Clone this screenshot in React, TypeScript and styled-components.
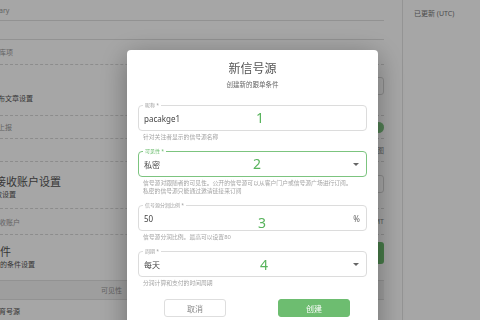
import React from 'react';
import styled, { createGlobalStyle } from 'styled-components';

const GlobalStyle = createGlobalStyle`
  html, body {
    margin: 0;
    padding: 0;
    width: 480px;
    height: 320px;
    overflow: hidden;
    background: #fff;
  }
  body {
    font-family: "Noto Sans", "Noto Sans CJK SC", sans-serif;
  }
`;

const Page = styled.div`
  display: flex;
  width: 480px;
  height: 320px;
  overflow: hidden;
  background: #fff;
`;

const Main = styled.div`
  width: 403px;
  flex: none;
  box-sizing: border-box;
  padding-right: 18px;
  border-right: 1px solid #e4e4e4;
  display: flex;
  flex-direction: column;
`;

const Row = styled.div<{ $h: number; $line?: 'solid' | 'dashed' | 'none'; $align?: string; $shade?: boolean }>`
  height: ${(p) => p.$h}px;
  flex: none;
  box-sizing: border-box;
  display: flex;
  justify-content: space-between;
  align-items: ${(p) => p.$align || 'center'};
  background: ${(p) => (p.$shade ? '#f3f3f3' : 'transparent')};
  border-bottom: ${(p) =>
    p.$line === 'none' ? 'none' : p.$line === 'dashed' ? '1px dashed #d8d8d8' : '1px solid #e0e0e0'};
`;

const Label = styled.span<{ $cut?: number }>`
  margin-left: ${(p) => -(p.$cut || 0)}px;
  font-size: 7px;
  color: #999;
  white-space: nowrap;
`;

const SectionText = styled.div<{ $cut?: number; $top?: number; $bottom?: number }>`
  margin: ${(p) => p.$top || 0}px 0 ${(p) => p.$bottom || 0}px ${(p) => -(p.$cut || 0)}px;
  display: flex;
  flex-direction: column;
  white-space: nowrap;
`;

const SectionTitle = styled.span`
  font-size: 11px;
  line-height: 15px;
  color: #555;
`;

const SectionSub = styled.span<{ $indent?: number }>`
  padding-left: ${(p) => p.$indent || 0}px;
  font-size: 7px;
  line-height: 11px;
  color: #555;
`;

const HeaderLabel = styled.span<{ $cut?: number; $bottom?: number }>`
  margin: 0 0 ${(p) => p.$bottom || 0}px ${(p) => -(p.$cut || 0)}px;
  font-size: 7px;
  line-height: 10px;
  color: #555;
  white-space: nowrap;
`;

const GhostInput = styled.div<{ $mt?: number; $mb?: number }>`
  width: 120px;
  height: 18px;
  margin: ${(p) => p.$mt || 0}px 0 ${(p) => p.$mb || 0}px;
  border: 1px solid #d6d6d6;
  border-radius: 3px;
  box-sizing: border-box;
`;

const Toggle = styled.div`
  width: 22px;
  height: 10px;
  border-radius: 5px;
  background: #c9e6ca;
  display: flex;
  justify-content: flex-end;
  align-items: center;
`;

const Knob = styled.div`
  width: 11px;
  height: 11px;
  border-radius: 50%;
  background: #7fc482;
`;

const SideText = styled.span`
  font-size: 7px;
  color: #888;
`;

const GreenBlock = styled.div`
  width: 60px;
  height: 22px;
  margin-bottom: 16px;
  border-radius: 3px;
  background: #6dbd70;
`;

const HeadCell = styled.div`
  width: 122px;
  font-size: 7px;
  color: #999;
  text-align: right;
`;

const Sidebar = styled.div`
  flex: 1;
  padding: 9px 11px;
  font-size: 7px;
  line-height: 10px;
`;

const SidebarNote = styled.span`
  color: #777;
`;

const Overlay = styled.div`
  position: fixed;
  inset: 0;
  background: rgba(0, 0, 0, 0.35);
  display: flex;
  align-items: flex-start;
  padding: 50px 0 0 127px;
  box-sizing: border-box;
`;

const Modal = styled.div`
  width: 251px;
  height: 300px;
  flex: none;
  box-sizing: border-box;
  background: #fff;
  border-radius: 4px;
  box-shadow: 0 6px 28px rgba(0, 0, 0, 0.35);
  padding: 11px 11px 0;
  display: flex;
  flex-direction: column;
`;

const Title = styled.div`
  text-align: center;
  font-size: 12px;
  line-height: 16px;
  color: #555;
`;

const Subtitle = styled.div`
  text-align: center;
  font-size: 6.5px;
  line-height: 10px;
  color: #666;
  margin: 3px 0 15px;
`;

const Group = styled.div`
  margin-bottom: 10px;
`;

const Field = styled.div<{ $focus?: boolean }>`
  position: relative;
  height: 26px;
  box-sizing: border-box;
  border: 1px solid ${(p) => (p.$focus ? '#7cc47f' : '#dcdcdc')};
  border-radius: 4px;
  display: flex;
  align-items: center;
  padding: 0 6px 0 5px;
`;

const FieldLabel = styled.span<{ $focus?: boolean }>`
  position: absolute;
  top: -4px;
  left: 4px;
  padding: 0 2px;
  background: #fff;
  font-size: 5px;
  line-height: 7px;
  color: ${(p) => (p.$focus ? '#6bbd6e' : '#a0a0a0')};
`;

const Value = styled.span`
  flex: 1;
  font-size: 8px;
  color: #444;
`;

const Suffix = styled.span`
  font-size: 8px;
  color: #666;
`;

const Caret = styled.span`
  width: 0;
  height: 0;
  margin-right: 1px;
  border-left: 3px solid transparent;
  border-right: 3px solid transparent;
  border-top: 3.5px solid #666;
`;

const Marker = styled.span<{ $x: number; $y: number }>`
  position: absolute;
  left: ${(p) => p.$x}px;
  top: ${(p) => p.$y}px;
  font-size: 14px;
  line-height: 16px;
  color: #57b35b;
`;

const Helper = styled.div`
  margin-top: 2px;
  padding-left: 5px;
  font-size: 5.8px;
  line-height: 8px;
  color: #a3a3a3;
  white-space: nowrap;
`;

const Actions = styled.div`
  display: flex;
  gap: 52px;
  padding-left: 26px;
  margin-top: 2px;
`;

const Button = styled.button<{ $primary?: boolean }>`
  width: ${(p) => (p.$primary ? 72 : 62)}px;
  height: 18px;
  box-sizing: border-box;
  border-radius: 3px;
  border: 1px solid ${(p) => (p.$primary ? '#6dbd70' : '#dedede')};
  background: ${(p) => (p.$primary ? '#6dbd70' : '#fff')};
  color: ${(p) => (p.$primary ? '#fff' : '#888')};
  font-family: inherit;
  font-size: 8px;
  padding: 0;
`;

export default function App() {
  return (
    <>
      <GlobalStyle />
      <Page>
        <Main>
          <Row $h={21}>
            <Label $cut={1}>ary</Label>
          </Row>
          <Row $h={19} />
          <Row $h={25} $line="dashed">
            <Label $cut={1}>库项</Label>
          </Row>
          <Row $h={51} $line="dashed" $align="flex-end">
            <HeaderLabel $cut={2} $bottom={11}>布文章设置</HeaderLabel>
            <GhostInput $mb={20} />
          </Row>
          <Row $h={23} $line="dashed">
            <Label $cut={2}>上报</Label>
            <Toggle>
              <Knob />
            </Toggle>
          </Row>
          <Row $h={23} $line="dashed">
            <span />
            <SideText>设置图</SideText>
          </Row>
          <Row $h={47} $line="dashed" $align="flex-start">
            <SectionText $cut={5} $top={12}>
              <SectionTitle>接收账户设置</SectionTitle>
              <SectionSub>效设置</SectionSub>
            </SectionText>
            <GhostInput $mt={13} />
          </Row>
          <Row $h={26} $line="dashed">
            <Label $cut={1}>收账户</Label>
            <SideText>GMT</SideText>
          </Row>
          <Row $h={46} $align="flex-end">
            <SectionText $cut={11} $bottom={10}>
              <SectionTitle>条件</SectionTitle>
              <SectionSub $indent={11}>的条件设置</SectionSub>
            </SectionText>
            <GreenBlock />
          </Row>
          <Row $h={19} $shade>
            <HeadCell>可见性</HeadCell>
          </Row>
          <Row $h={24} $line="none">
            <HeaderLabel $cut={1}>育号源</HeaderLabel>
          </Row>
        </Main>
        <Sidebar>
          <SidebarNote>已更新 (UTC)</SidebarNote>
        </Sidebar>
      </Page>
      <Overlay>
        <Modal>
          <Title>新信号源</Title>
          <Subtitle>创建新的跟单条件</Subtitle>

          <Group>
            <Field>
              <FieldLabel>昵称 *</FieldLabel>
              <Value>pacakge1</Value>
              <Marker $x={117} $y={4}>1</Marker>
            </Field>
            <Helper>针对关注者显示的信号源名称</Helper>
          </Group>

          <Group>
            <Field $focus>
              <FieldLabel $focus>可见性 *</FieldLabel>
              <Value>私密</Value>
              <Caret />
              <Marker $x={114} $y={4}>2</Marker>
            </Field>
            <Helper>
              信号源对跟随者的可见性。公开的信号源可以从客户门户或信号源广场进行订阅。
              <br />
              私密的信号源只能通过邀请链接来订阅
            </Helper>
          </Group>

          <Group>
            <Field>
              <FieldLabel>信号源分润比例 *</FieldLabel>
              <Value>50</Value>
              <Suffix>%</Suffix>
              <Marker $x={119} $y={9}>3</Marker>
            </Field>
            <Helper>信号源分润比例。最高可以设置80</Helper>
          </Group>

          <Group>
            <Field>
              <FieldLabel>周期 *</FieldLabel>
              <Value>每天</Value>
              <Caret />
              <Marker $x={121} $y={5}>4</Marker>
            </Field>
            <Helper>分润计算和支付的时间周期</Helper>
          </Group>

          <Actions>
            <Button>取消</Button>
            <Button $primary>创建</Button>
          </Actions>
        </Modal>
      </Overlay>
    </>
  );
}
